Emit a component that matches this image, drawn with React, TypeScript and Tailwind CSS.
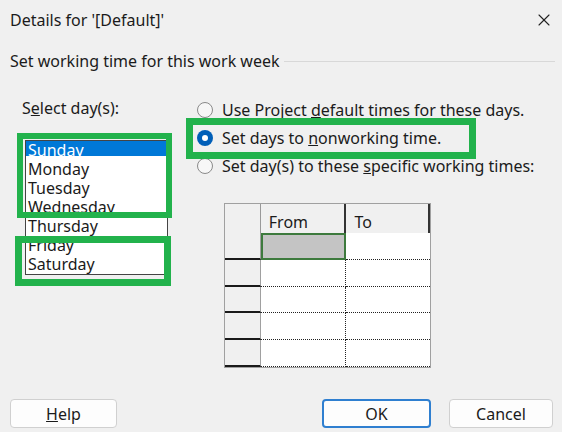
import { X } from 'lucide-react';

const days = ['Sunday', 'Monday', 'Tuesday', 'Wednesday', 'Thursday', 'Friday', 'Saturday'];

function Radio({ checked }: { checked?: boolean }) {
  return checked ? (
    <span className="w-[16px] h-[16px] rounded-full bg-[#005fb8] flex items-center justify-center shrink-0">
      <span className="w-[6px] h-[6px] rounded-full bg-white" />
    </span>
  ) : (
    <span className="w-[16px] h-[16px] rounded-full border border-[#8a8a8a] bg-[#f7f7f7] shrink-0" />
  );
}

function GridRow({ first }: { first?: boolean }) {
  return (
    <div className="flex h-[26.8px]">
      <div className="w-[36px] bg-[#f0f0f0] border-b-2 border-r border-b-[#1a1a1a] border-r-[#a0a0a0]" />
      {first ? (
        <div className="w-[86px] bg-[#c4c4c4] border-2 border-[#3d7a3d]" />
      ) : (
        <div className="w-[86px] bg-white border-b border-r border-dotted border-[#222]" />
      )}
      <div className="w-[84px] bg-white border-b border-dotted border-[#222]" />
    </div>
  );
}

export default function App() {
  return (
    <div
      className="relative w-[562px] h-[432px] bg-[#f0f0f0] text-[#1b1b1b] flex flex-col overflow-hidden"
      style={{ fontFamily: '"Noto Sans", "Open Sans", sans-serif' }}
    >
      <div className="h-[40px] flex items-center justify-between pl-[10px] pr-[8px] text-[16px]">
        <span>Details for '[Default]'</span>
        <X className="w-[20px] h-[20px] text-[#222]" strokeWidth={1.3} />
      </div>

      <div className="h-[42px] flex items-center pl-[10px] pr-[7px] gap-[4px] text-[16px]">
        <span>Set working time for this work week</span>
        <span className="flex-1 border-t border-[#d8d8d8]" />
      </div>

      <div className="flex">
        <div className="w-[197px] shrink-0 pl-[22px]">
          <div className="mt-[16px] h-[20px] flex items-center text-[16px]">
            <span>
              S<span className="underline">e</span>lect day(s):
            </span>
          </div>
          <div className="mt-[22px] ml-[3px] w-[143px] h-[135px] bg-white border border-[#444] overflow-hidden">
            {days.map((d, i) => (
              <div
                key={d}
                className={`h-[19px] pl-[2px] text-[16px] leading-[18px] ${
                  i === 0 ? 'text-white bg-[linear-gradient(#0078d7_0,#0078d7_15px,transparent_15px)]' : ''
                }`}
              >
                {d}
              </div>
            ))}
          </div>
        </div>

        <div className="flex-1">
          <div className="mt-[14px] text-[16px]">
            <div className="h-[28px] flex items-center gap-[9px]">
              <Radio />
              <span>
                Use Project <span className="underline">d</span>efault times for these days.
              </span>
            </div>
            <div className="h-[28px] flex items-center gap-[9px]">
              <Radio checked />
              <span>
                Set days to <span className="underline">n</span>onworking time.
              </span>
            </div>
            <div className="h-[28px] flex items-center gap-[9px]">
              <Radio />
              <span>
                Set day(s) to these <span className="underline">s</span>pecific working times:
              </span>
            </div>
          </div>

          <div className="mt-[23px] ml-[27px] w-[207px] border border-[#a0a0a0] text-[16px]">
            <div className="flex h-[29px] bg-[#f0f0f0] leading-[22px]">
              <div className="w-[36px] border-r border-[#999]" />
              <div className="w-[86px] border-r-2 border-[#333] pl-[8px] flex items-end">From</div>
              <div className="w-[84px] border-r-2 border-[#333] pl-[8px] flex items-end">To</div>
            </div>
            <GridRow first />
            <GridRow />
            <GridRow />
            <GridRow />
            <GridRow />
          </div>
        </div>
      </div>

      <div className="mt-auto mb-[4px] flex items-center pl-[10px] pr-[9px] text-[16px]">
        <button className="w-[107px] h-[29px] rounded-[4px] bg-[#fdfdfd] border border-[#d0d0d0]">
          <span className="underline">H</span>elp
        </button>
        <button className="ml-auto w-[109px] h-[29px] rounded-[4px] bg-[#fdfdfd] border-2 border-[#2f7fd0]">
          OK
        </button>
        <button className="ml-[18px] w-[104px] h-[29px] rounded-[4px] bg-[#fdfdfd] border border-[#d0d0d0]">
          Cancel
        </button>
      </div>

      {/* green annotation boxes */}
      <div className="absolute left-[17px] top-[133px] w-[155px] h-[85px] border-[6px] border-[#22b24c] pointer-events-none" />
      <div className="absolute left-[15px] top-[236px] w-[156px] h-[50px] border-[7px] border-[#22b24c] pointer-events-none" />
      <div className="absolute left-[186px] top-[118px] w-[290px] h-[41px] border-[7px] border-[#22b24c] pointer-events-none" />
    </div>
  );
}
